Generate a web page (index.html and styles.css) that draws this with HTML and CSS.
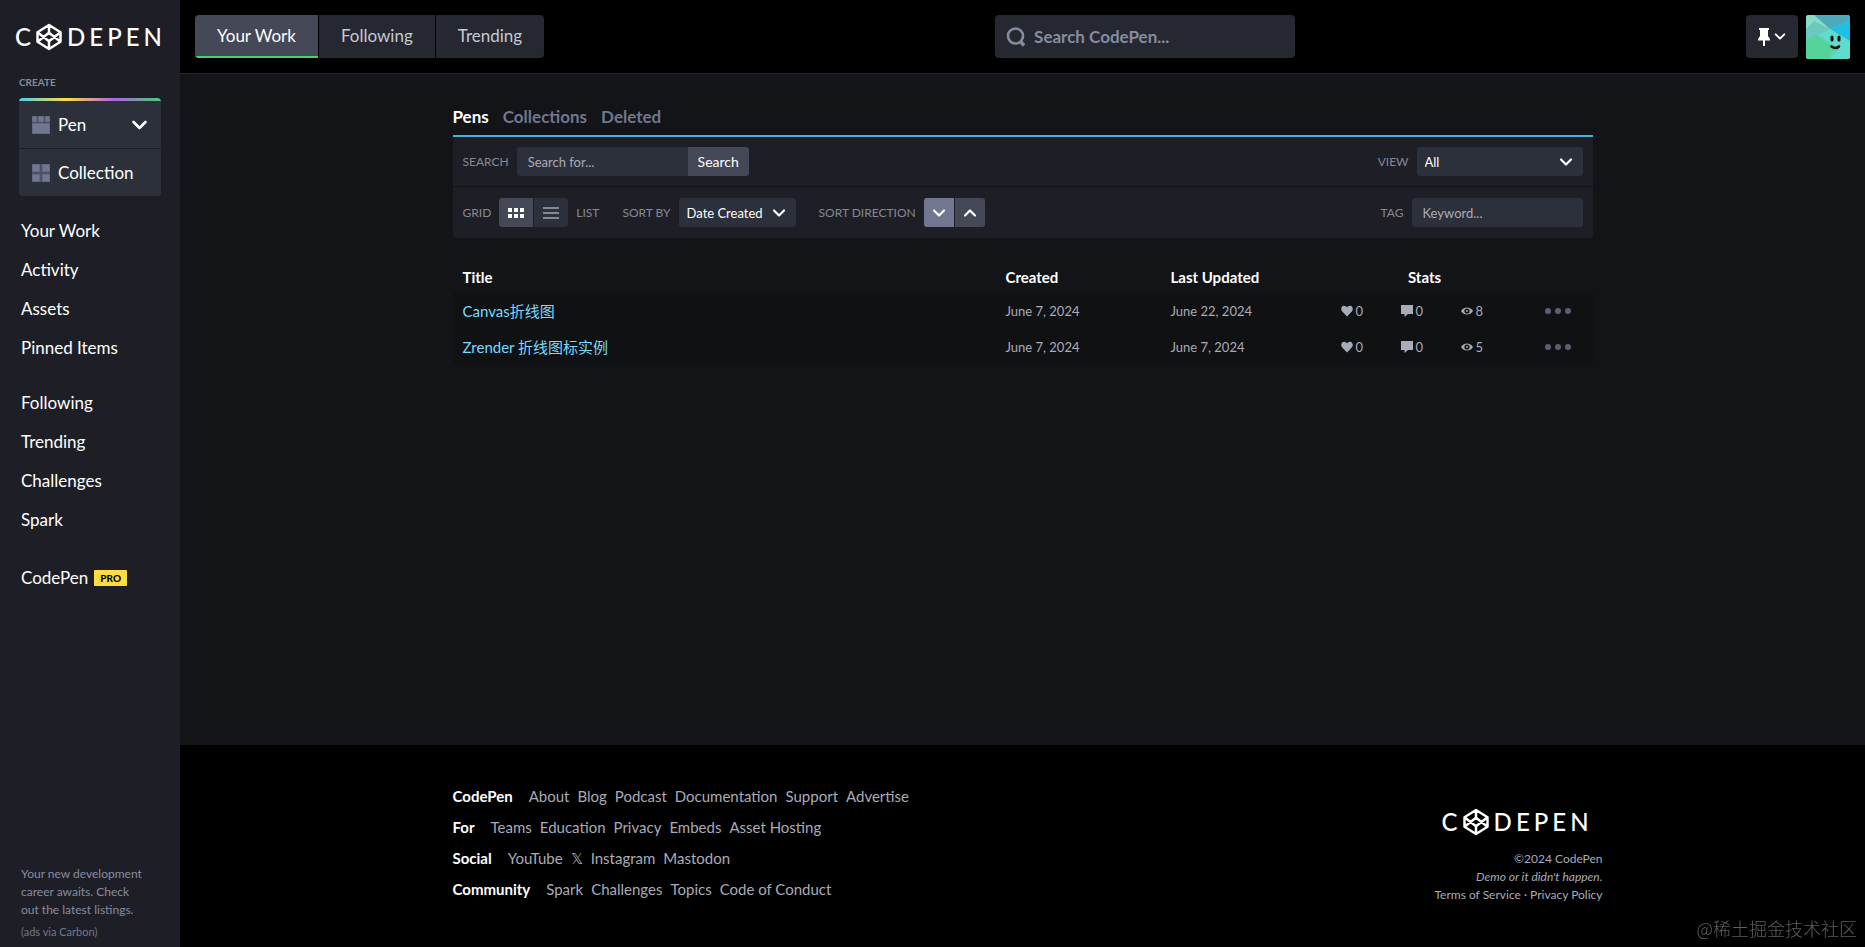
FILE: index.html
```html
<!DOCTYPE html>
<html lang="en">
<head>
  <meta charset="UTF-8">
  <meta name="viewport" content="width=device-width, initial-scale=1.0">
  <title>Your Work on CodePen</title>
  <link rel="stylesheet" href="styles.css">
</head>
<body>
  <!-- shared icons -->
  <svg class="sprite" aria-hidden="true">
    <symbol id="hex" viewBox="0 0 28 28">
      <path d="M14 2 L25.5 9.3 V18.7 L14 26 L2.500 18.7 V9.3 Z M14 2 V9.5 M14 18.500 V26 M2.500 9.3 L14 18.300 L25.5 9.3 M2.500 18.7 L14 9.700 L25.5 18.7" fill="none" stroke="#fff" stroke-width="2.500" stroke-linejoin="round"/>
    </symbol>
    <symbol id="down" viewBox="0 0 14 10">
      <path d="M2 2.500 L7 7.500 L12 2.500" fill="none" stroke="currentColor" stroke-width="2.200" stroke-linecap="round" stroke-linejoin="round"/>
    </symbol>
    <symbol id="heart" viewBox="0 0 12 12">
      <path d="M6 11.500 L1 6.200 C-.6 4 .4 1 3 .8 C4.500 .8 5.500 1.600 6 2.600 C6.500 1.600 7.500 .8 9 .8 C11.600 1 12.600 4 11 6.200 Z" fill="currentColor"/>
    </symbol>
    <symbol id="comment" viewBox="0 0 12 12">
      <path d="M0 0 H12 V9 H7 L3.500 12 V9 H0 Z" fill="currentColor"/>
    </symbol>
    <symbol id="eye" viewBox="0 0 12 12">
      <path d="M0 6 C2.500 1.200 9.500 1.200 12 6 C9.500 10.800 2.500 10.800 0 6 Z M6 3.400 A2.600 2.600 0 1 0 6 8.600 A2.600 2.600 0 1 0 6 3.400 Z" fill="currentColor" fill-rule="evenodd"/>
      <circle cx="6" cy="6" r="1" fill="currentColor"/>
    </symbol>
  </svg>

  <div class="layout">
    <aside class="sidebar">
      <a class="logo" href="#" aria-label="CodePen"><span>C</span><svg><use href="#hex"/></svg><span>D</span><span>E</span><span>P</span><span>E</span><span>N</span></a>
      <h2 class="create-title">Create</h2>
      <div class="create">
        <div class="create-row">
          <a href="#">
            <svg viewBox="0 0 18 18"><path d="M0 0 H5 V6 H0 Z M6 0 H12 V6 H6 Z M13 0 H18 V6 H13 Z M0 7 H18 V18 H0 Z"/></svg>
            Pen
          </a>
          <button class="create-more" aria-label="More"><svg><use href="#down"/></svg></button>
        </div>
        <div class="create-row">
          <a href="#">
            <svg viewBox="0 0 18 18"><path d="M0 0 H8 V8 H0 Z M10 0 H18 V8 H10 Z M0 10 H8 V18 H0 Z M10 10 H18 V18 H10 Z M9 0 V18 M0 9 H18"/></svg>
            Collection
          </a>
        </div>
      </div>
      <nav class="side-nav">
        <ul>
          <li><a href="#">Your Work</a></li>
          <li><a href="#">Activity</a></li>
          <li><a href="#">Assets</a></li>
          <li><a href="#">Pinned Items</a></li>
        </ul>
        <ul>
          <li><a href="#">Following</a></li>
          <li><a href="#">Trending</a></li>
          <li><a href="#">Challenges</a></li>
          <li><a href="#">Spark</a></li>
        </ul>
        <ul>
          <li><a href="#">CodePen <span class="pro">PRO</span></a></li>
        </ul>
      </nav>
      <div class="ad">
        <a href="#">Your new development career awaits. Check out the latest listings.</a>
        <a class="ad-via" href="#">(ads via Carbon)</a>
      </div>
    </aside>

    <div class="page">
      <header class="topbar">
        <nav class="top-tabs">
          <a class="active" href="#">Your Work</a>
          <a href="#">Following</a>
          <a href="#">Trending</a>
        </nav>
        <form class="top-search">
          <svg viewBox="0 0 20 20"><path d="M14 14 L18 18.500" stroke-width="3.500"/><circle cx="9.500" cy="9" r="7.500" stroke-width="2.600"/></svg>
          <input type="search" placeholder="Search CodePen..." aria-label="Search CodePen">
        </form>
        <div class="user">
          <button class="pin" aria-label="Pinned items">
            <svg class="pin-icon" viewBox="0 0 12 18"><path d="M1 0 H11 V2 H10 V8 L12 11 V12.500 H7 V18 H5 V12.500 H0 V11 L2 8 V2 H1 Z"/></svg>
            <svg class="pin-arrow"><use href="#down"/></svg>
          </button>
          <button class="avatar" aria-label="Account">
            <svg viewBox="0 0 44 44">
              <rect width="44" height="44" fill="#5bd6c0"/>
              <path d="M0 0 H12 L26 14 L0 26 Z" fill="#8adcc8"/>
              <path d="M8 0 H44 V6 L24 14 Z" fill="#4fa9b8"/>
              <path d="M24 14 L44 6 V30 Z" fill="#1fc0e8"/>
              <path d="M0 14 L8 6 L24 14 L0 27 Z" fill="#6cc9c0"/>
              <path d="M0 25 L10 20 L30 32 L22 44 H0 Z" fill="#55d39a"/>
              <path d="M24 14 L44 26 V44 H24 L34 34 L12 20 Z" fill="#5fdccb"/>
              <path d="M26 22 V25 M33 22 V25" stroke="#111" stroke-width="3" stroke-linecap="round"/>
              <path d="M25.500 31.500 Q29.500 34.500 33 31.500" fill="none" stroke="#111" stroke-width="2.600" stroke-linecap="round"/>
            </svg>
          </button>
        </div>
      </header>

      <main>
        <nav class="tabs">
          <a class="active" href="#">Pens</a>
          <a href="#">Collections</a>
          <a href="#">Deleted</a>
        </nav>
        <form class="filters">
          <div class="filter-row">
            <div class="field">
              <label for="search">Search</label>
              <div class="group">
                <input class="search-input" type="text" id="search" placeholder="Search for...">
                <button class="search-btn" type="button">Search</button>
              </div>
            </div>
            <div class="field right">
              <label for="view">View</label>
              <div class="select view">
                <select id="view">
                  <option>All</option>
                  <option>Public</option>
                  <option>Private</option>
                </select>
                <svg><use href="#down"/></svg>
              </div>
            </div>
          </div>
          <div class="filter-row second">
            <div class="field">
              <span class="label">Grid</span>
              <div class="group">
                <button class="toggle on" type="button" aria-label="Grid">
                  <svg viewBox="0 0 16 12"><path d="M0 1 H4 V5 H0 Z M6 1 H10 V5 H6 Z M12 1 H16 V5 H12 Z M0 7 H4 V11 H0 Z M6 7 H10 V11 H6 Z M12 7 H16 V11 H12 Z" fill="#fff"/></svg>
                </button>
                <button class="toggle" type="button" aria-label="List">
                  <svg viewBox="0 0 16 12"><path d="M0 0 H16 V2 H0 Z M0 5 H16 V7 H0 Z M0 10 H16 V12 H0 Z" fill="#868894"/></svg>
                </button>
              </div>
              <span class="label">List</span>
            </div>
            <div class="field">
              <label for="sort">Sort by</label>
              <div class="select">
                <select id="sort">
                  <option>Date Created</option>
                  <option>Date Updated</option>
                  <option>Popularity</option>
                </select>
                <svg><use href="#down"/></svg>
              </div>
            </div>
            <div class="field">
              <span class="label">Sort direction</span>
              <div class="group">
                <button class="dir on" type="button" aria-label="Descending"><svg><use href="#down"/></svg></button>
                <button class="dir up" type="button" aria-label="Ascending"><svg><use href="#down"/></svg></button>
              </div>
            </div>
            <div class="field right">
              <label for="tag">Tag</label>
              <input class="tag-input" type="text" id="tag" placeholder="Keyword...">
            </div>
          </div>
        </form>

        <table class="pens">
          <thead>
            <tr>
              <th class="col-title">Title</th>
              <th class="col-date">Created</th>
              <th class="col-date">Last Updated</th>
              <th class="col-stats">Stats</th>
              <th class="col-more"></th>
            </tr>
          </thead>
          <tbody>
            <tr>
              <td><a href="#">Canvas折线图</a></td>
              <td>June 7, 2024</td>
              <td>June 22, 2024</td>
              <td>
                <div class="stats">
                  <span><svg><use href="#heart"/></svg>0</span>
                  <span><svg><use href="#comment"/></svg>0</span>
                  <span><svg><use href="#eye"/></svg>8</span>
                </div>
              </td>
              <td><button class="more" aria-label="More"><i></i><i></i><i></i></button></td>
            </tr>
            <tr>
              <td><a href="#">Zrender 折线图标实例</a></td>
              <td>June 7, 2024</td>
              <td>June 7, 2024</td>
              <td>
                <div class="stats">
                  <span><svg><use href="#heart"/></svg>0</span>
                  <span><svg><use href="#comment"/></svg>0</span>
                  <span><svg><use href="#eye"/></svg>5</span>
                </div>
              </td>
              <td><button class="more" aria-label="More"><i></i><i></i><i></i></button></td>
            </tr>
          </tbody>
        </table>
      </main>

      <footer>
        <div class="footer-inner">
          <div class="footer-links">
            <div class="footer-row"><h3>CodePen</h3><a href="#">About</a><a href="#">Blog</a><a href="#">Podcast</a><a href="#">Documentation</a><a href="#">Support</a><a href="#">Advertise</a></div>
            <div class="footer-row"><h3>For</h3><a href="#">Teams</a><a href="#">Education</a><a href="#">Privacy</a><a href="#">Embeds</a><a href="#">Asset Hosting</a></div>
            <div class="footer-row"><h3>Social</h3><a href="#">YouTube</a><a href="#">𝕏</a><a href="#">Instagram</a><a href="#">Mastodon</a></div>
            <div class="footer-row"><h3>Community</h3><a href="#">Spark</a><a href="#">Challenges</a><a href="#">Topics</a><a href="#">Code of Conduct</a></div>
          </div>
          <div class="footer-legal">
            <a class="logo" href="#" aria-label="CodePen"><span>C</span><svg><use href="#hex"/></svg><span>D</span><span>E</span><span>P</span><span>E</span><span>N</span></a>
            <p>©2024 CodePen</p>
            <p><em>Demo or it didn't happen.</em></p>
            <p><a href="#">Terms of Service</a> · <a href="#">Privacy Policy</a></p>
          </div>
        </div>
      </footer>
    </div>
  </div>
  <div class="watermark">@稀土掘金技术社区</div>
</body>
</html>
```
FILE: styles.css
```css
* {
  box-sizing: border-box;
}

body {
  margin: 0;
  background: #131417;
  color: #fff;
  font-family: Lato, "Noto Sans CJK SC", sans-serif;
  font-size: 16px;
}

a {
  color: inherit;
  text-decoration: none;
}

button,
input,
select {
  font-family: inherit;
  border: 0;
  margin: 0;
}

button {
  cursor: pointer;
  padding: 0;
  color: #fff;
}

ul {
  list-style: none;
  margin: 0;
  padding: 0;
}

svg {
  display: block;
}

.sprite {
  position: absolute;
  width: 0;
  height: 0;
}

.layout {
  display: flex;
  min-height: 100vh;
}

/* Sidebar */
.sidebar {
  width: 180px;
  flex: none;
  display: flex;
  flex-direction: column;
  background: #1e1f26;
  padding: 22px 19px 6px;
}

.logo {
  display: flex;
  align-items: center;
  gap: 4px;
  height: 30px;
  font-size: 24px;
  line-height: 30px;
  font-weight: 500;
}

.logo svg {
  width: 28px;
  height: 28px;
}

.sidebar .logo {
  margin: 0 -4px;
}

.create-title {
  margin: 22px 0 8px;
  font-size: 10px;
  line-height: 16px;
  font-weight: 700;
  text-transform: uppercase;
  color: #868ca0;
}

.create {
  border-radius: 4px;
  background: linear-gradient(90deg, #47cfeb, #ffdd40 33%, #ae63e4 67%, #47cf73) top / 100% 3px no-repeat #2c303a;
  padding-top: 3px;
  overflow: hidden;
}

.create-row {
  display: flex;
  justify-content: space-between;
  align-items: center;
  height: 47px;
  padding: 0 13px;
  font-size: 17px;
}

.create-row:first-child {
  height: 48px;
  border-bottom: 1px solid #1e1f26;
}

.create-row a {
  display: flex;
  align-items: center;
  gap: 8px;
}

.create-row a svg {
  width: 18px;
  height: 18px;
  fill: #717790;
  stroke: #5a5f73;
}

.create-more {
  background: none;
}

.create-more svg {
  width: 17px;
  height: 12px;
}

.side-nav {
  margin-top: 15px;
  padding: 0 2px;
  font-size: 17px;
  line-height: 39px;
}

.side-nav ul {
  margin-bottom: 16px;
}

.side-nav ul:last-child {
  margin-top: 19px;
}

.side-nav a {
  display: flex;
  align-items: center;
  gap: 6px;
}

.pro {
  background: #ffdd40;
  color: #000;
  font-size: 10px;
  line-height: 16px;
  font-weight: 900;
  padding: 0 6px;
  border-radius: 1px;
}

.ad {
  margin-top: auto;
  padding-left: 2px;
  width: 130px;
  font-size: 12px;
  line-height: 18px;
  color: #868ca0;
}

.ad a {
  display: block;
}

.ad .ad-via {
  margin-top: 4px;
  font-size: 11px;
  color: #717790;
}

/* Header */
.page {
  flex: 1;
  min-width: 0;
  display: flex;
  flex-direction: column;
}

.topbar {
  display: flex;
  justify-content: space-between;
  background: #000;
  border-bottom: 1px solid #252830;
  padding: 15px 15px 14px;
}

.top-tabs {
  display: flex;
  gap: 1px;
  height: 43px;
  border-radius: 4px;
  overflow: hidden;
}

.top-tabs a {
  padding: 0 22px;
  font-size: 17px;
  line-height: 41px;
  background: #252830;
  color: #c7c9d3;
}

.top-tabs .active {
  background: #444857;
  color: #fff;
  border-bottom: 2px solid #47cf73;
}

.top-search {
  display: flex;
  align-items: center;
  gap: 8px;
  width: 300px;
  height: 43px;
  padding: 0 11px;
  border-radius: 4px;
  background: #252830;
}

.top-search svg {
  width: 20px;
  height: 20px;
  fill: none;
  stroke: #868ca0;
}

.top-search input {
  flex: 1;
  min-width: 0;
  padding: 0;
  font-size: 17px;
  font-weight: 700;
  background: none;
  color: #fff;
}

.top-search input::placeholder {
  color: #868ca0;
}

.user {
  display: flex;
  gap: 8px;
}

.pin {
  display: flex;
  align-items: center;
  justify-content: center;
  gap: 4px;
  width: 52px;
  height: 43px;
  border-radius: 4px;
  background: #252830;
}

.pin-icon {
  width: 12px;
  height: 18px;
  fill: #fff;
}

.pin-arrow {
  width: 12px;
  height: 9px;
}

.avatar {
  width: 44px;
  height: 44px;
  border-radius: 3px;
  overflow: hidden;
}

/* Main */
main {
  flex: 1;
  width: 100%;
  max-width: 1140px;
  margin: 0 auto;
  padding-top: 29px;
}

.tabs {
  display: flex;
  gap: 14px;
  height: 34px;
  font-size: 17px;
  line-height: 28px;
  font-weight: 700;
  color: #717790;
  border-bottom: 2px solid #4cafd6;
}

.tabs .active {
  color: #fff;
}

.filters {
  border-radius: 0 0 4px 4px;
  background: #1e1f26;
}

.filter-row {
  display: flex;
  align-items: center;
  gap: 23px;
  height: 50px;
  padding: 0 10px;
  border-bottom: 1px solid #131417;
}

.second {
  height: 51px;
  border-bottom: 0;
}

.field {
  display: flex;
  align-items: center;
  gap: 8px;
}

.right {
  margin-left: auto;
}

.field label,
.label {
  font-size: 12px;
  text-transform: uppercase;
  color: #868894;
}

.group {
  display: flex;
  border-radius: 3px;
  overflow: hidden;
}

.field input,
.select select {
  height: 29px;
  font-size: 13px;
  background: #2c303a;
  color: #fff;
}

.field input {
  padding: 0 11px;
}

.field input::placeholder {
  color: #a9abb8;
}

.search-input {
  width: 171px;
}

.search-btn {
  width: 61px;
  height: 29px;
  font-size: 14px;
  background: #444857;
}

.tag-input {
  width: 171px;
  border-radius: 3px;
}

.select {
  display: flex;
  align-items: center;
}

.select select {
  appearance: none;
  width: 117px;
  padding: 0 8px;
  border-radius: 3px;
}

.select svg {
  width: 14px;
  height: 10px;
  margin-left: -24px;
  margin-right: 10px;
  pointer-events: none;
}

.view select {
  width: 166px;
}

.toggle,
.dir {
  display: flex;
  align-items: center;
  justify-content: center;
  width: 34px;
  height: 29px;
  background: #2c303a;
}

.toggle svg {
  width: 16px;
  height: 12px;
}

.toggle.on {
  background: #444857;
  border-right: 1px solid #1e1f26;
  width: 35px;
}

.dir {
  width: 30px;
  background: #444857;
}

.dir.on {
  width: 31px;
  background: #717790;
  border-right: 1px solid #1e1f26;
}

.dir svg {
  width: 14px;
  height: 10px;
}

.up svg {
  transform: rotate(180deg);
}

/* Table */
.pens {
  width: 100%;
  margin-top: 23px;
  border-collapse: collapse;
  table-layout: fixed;
  font-size: 13px;
  color: #a9abb8;
}

.pens th {
  height: 32px;
  padding: 0 10px;
  text-align: left;
  font-size: 15px;
  color: #fff;
}

.pens td {
  height: 36px;
  padding: 0 10px;
}

.pens tbody tr {
  background: #101113;
}

.pens td a {
  font-size: 15px;
  line-height: 20px;
  color: #76daff;
}

.col-date {
  width: 165px;
}

.pens .col-stats {
  width: 198px;
  text-align: center;
}

.col-more {
  width: 69px;
}

.stats {
  display: flex;
  padding-left: 5px;
}

.stats span {
  display: flex;
  flex: none;
  align-items: center;
  gap: 3px;
  width: 60px;
}

.stats svg {
  width: 12px;
  height: 12px;
}

.more {
  display: flex;
  gap: 4px;
  margin-left: auto;
  margin-right: 12px;
  background: none;
}

.more i {
  width: 6px;
  height: 6px;
  border-radius: 50%;
  background: #5a5f73;
}

/* Footer */
footer {
  background: #000;
}

.footer-inner {
  display: flex;
  justify-content: space-between;
  max-width: 1160px;
  margin: 0 auto;
  padding: 36px 0 36px 10px;
}

.footer-links {
  display: flex;
  flex-direction: column;
  gap: 1px;
  padding-bottom: 7px;
}

.footer-row {
  display: flex;
  gap: 8px;
  font-size: 15px;
  line-height: 30px;
  color: #a9abb8;
}

.footer-row h3 {
  margin: 0 8px 0 0;
  font-size: 15px;
  color: #fff;
}

.footer-legal {
  padding-top: 26px;
  font-size: 12px;
  line-height: 18px;
  text-align: right;
  color: #a9abb8;
}

.footer-legal p {
  margin: 0;
}

.footer-legal .logo {
  justify-content: flex-end;
  margin: 0 14px 13px 0;
  color: #fff;
}

.watermark {
  position: fixed;
  right: 8px;
  bottom: 6px;
  font-family: "Noto Sans CJK SC", sans-serif;
  font-size: 18px;
  line-height: 26px;
  font-weight: 300;
  color: #5e5e60;
}
```
